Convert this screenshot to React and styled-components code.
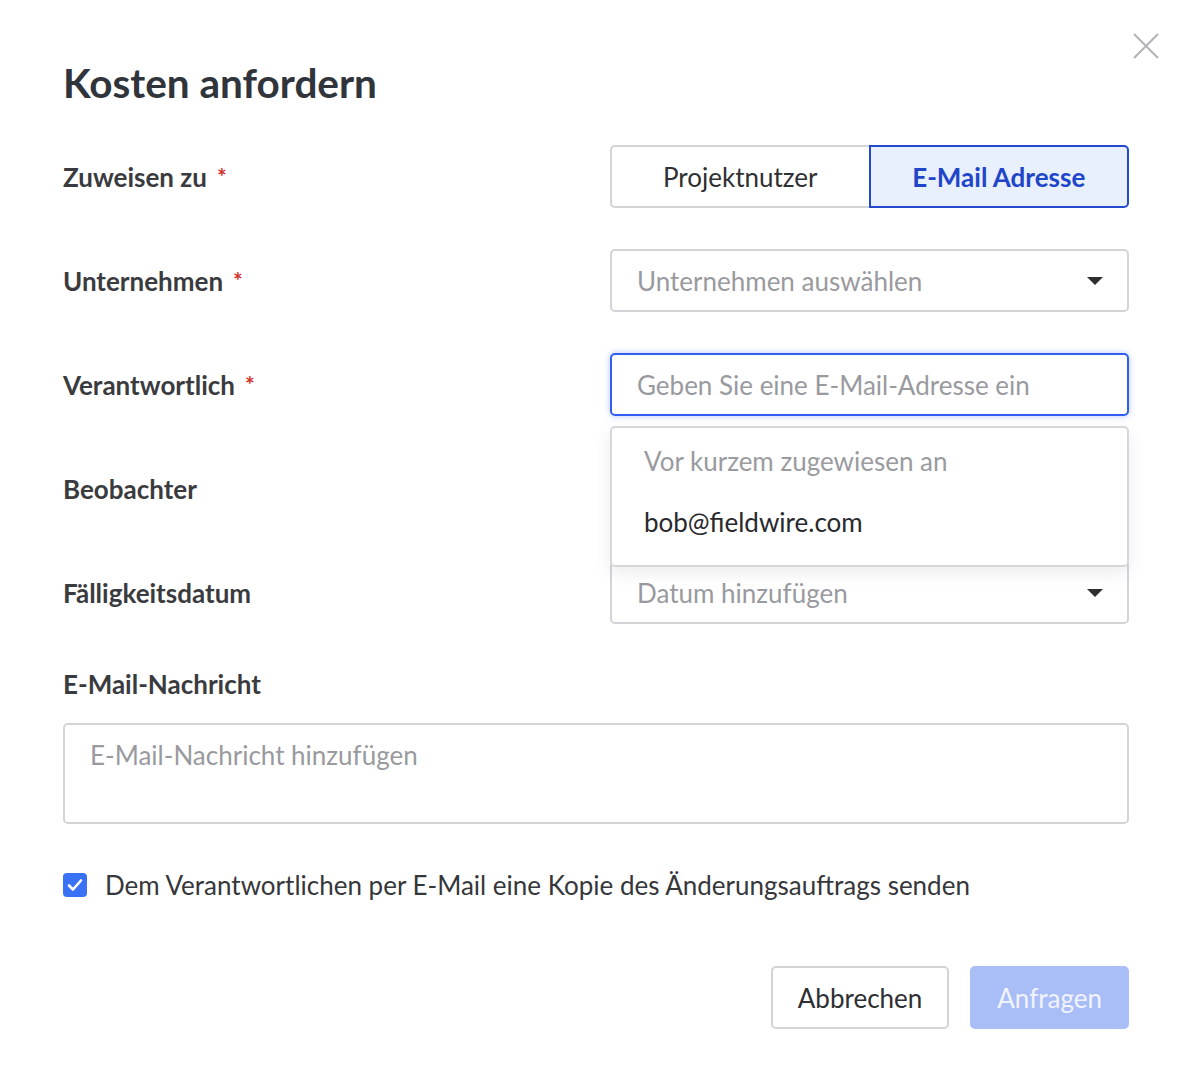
import React from 'react'
import styled, { createGlobalStyle } from 'styled-components'

const GlobalStyle = createGlobalStyle`
  html, body {
    margin: 0;
    padding: 0;
    background: #ffffff;
  }

  body {
    font-family: Lato, "Open Sans", sans-serif;
    color: #38393d;
  }
`

const Dialog = styled.div`
  position: relative;
  width: 1186px;
  height: 1070px;
  box-sizing: border-box;
  padding: 59px 57px 0 63px;
  background: #ffffff;
`

const CloseButton = styled.button`
  position: absolute;
  top: 31px;
  right: 25px;
  width: 30px;
  height: 30px;
  padding: 0;
  border: 0;
  background: transparent;
  cursor: pointer;

  svg {
    display: block;
  }
`

const Title = styled.h1`
  margin: 0;
  font-size: 40.5px;
  line-height: 48px;
  font-weight: 700;
  color: #30343b;
`

const Form = styled.div`
  display: flex;
  flex-direction: column;
  gap: 41px;
  margin-top: 38px;
`

const Row = styled.div`
  display: grid;
  grid-template-columns: 1fr 519px;
  align-items: center;
  height: 63px;
`

const Label = styled.label`
  font-size: 26px;
  font-weight: 700;
  color: #3a3b3e;
  line-height: 30px;
`

const Required = styled.span`
  color: #d0312d;
  font-size: 23px;
  margin-left: 10px;
  vertical-align: 2px;
`

const Segmented = styled.div`
  display: flex;
  height: 63px;
`

const Segment = styled.button`
  flex: 1;
  height: 100%;
  box-sizing: border-box;
  font-family: inherit;
  font-size: 26px;
  font-weight: ${(p) => (p.active ? 700 : 400)};
  color: ${(p) => (p.active ? '#1f45c9' : '#2f3033')};
  background: ${(p) => (p.active ? '#e8effd' : '#ffffff')};
  border: 2px solid ${(p) => (p.active ? '#2349cc' : '#d3d4d8')};
  border-radius: ${(p) => (p.active ? '0 5px 5px 0' : '5px 0 0 5px')};
  ${(p) => (p.active ? '' : 'border-right: 0;')}
  cursor: pointer;
`

const Field = styled.div`
  position: relative;
  height: 63px;
`

const Box = styled.div`
  display: flex;
  align-items: center;
  justify-content: space-between;
  height: 100%;
  box-sizing: border-box;
  padding: 0 24px 0 25px;
  border: 2px solid ${(p) => (p.focused ? '#2f5ef0' : '#d3d4d8')};
  border-radius: 5px;
  background: #ffffff;
  box-shadow: ${(p) => (p.focused ? '0 0 6px rgba(47, 94, 240, 0.35)' : 'none')};
  font-size: 26px;
`

const Placeholder = styled.span`
  color: #999a9e;
`

const Caret = styled.span`
  width: 0;
  height: 0;
  border-left: 8px solid transparent;
  border-right: 8px solid transparent;
  border-top: 8px solid #2d2e31;
`

const Menu = styled.div`
  position: absolute;
  z-index: 2;
  top: calc(100% + 10px);
  left: 0;
  right: 0;
  box-sizing: border-box;
  padding: 15px 0 25px;
  background: #ffffff;
  border: 2px solid #d6d7db;
  border-radius: 5px;
  box-shadow: 0 6px 18px rgba(0, 0, 0, 0.08);
`

const MenuHeader = styled.div`
  padding: 0 32px;
  font-size: 26px;
  line-height: 36px;
  color: #9a9b9f;
`

const MenuItem = styled.div`
  padding: 0 32px;
  margin-top: 25px;
  font-size: 26px;
  line-height: 36px;
  color: #28292c;
`

const MessageLabel = styled(Label)`
  display: block;
  margin-top: 45px;
`

const TextArea = styled.div`
  height: 101px;
  margin-top: 24px;
  box-sizing: border-box;
  padding: 14px 25px;
  border: 2px solid #d3d4d8;
  border-radius: 5px;
  font-size: 26px;
  line-height: 32px;
`

const CheckRow = styled.label`
  display: flex;
  align-items: center;
  gap: 18px;
  margin-top: 45px;
  font-size: 26px;
  color: #36373a;
`

const CheckBox = styled.span`
  display: flex;
  align-items: center;
  justify-content: center;
  width: 24px;
  height: 24px;
  border-radius: 4px;
  background: #3a72f5;
`

const Footer = styled.div`
  display: flex;
  justify-content: flex-end;
  gap: 21px;
  margin-top: 65px;
`

const Button = styled.button`
  height: 63px;
  box-sizing: border-box;
  padding: 0 25px;
  font-family: inherit;
  font-size: 26px;
  border-radius: 5px;
  color: ${(p) => (p.primary ? '#f1f4fe' : '#2e2f32')};
  background: ${(p) => (p.primary ? '#a9bdf7' : '#ffffff')};
  border: 2px solid ${(p) => (p.primary ? '#a9bdf7' : '#d3d4d8')};
  cursor: pointer;
`

export default function App() {
  return (
    <Dialog>
      <GlobalStyle />
      <CloseButton aria-label="Schließen">
        <svg width="30" height="30" viewBox="0 0 30 30">
          <path d="M3 3 L27 27 M27 3 L3 27" stroke="#b3b3b5" strokeWidth="2" fill="none" />
        </svg>
      </CloseButton>

      <Title>Kosten anfordern</Title>

      <Form>
        <Row>
          <Label>Zuweisen zu<Required>*</Required></Label>
          <Segmented>
            <Segment>Projektnutzer</Segment>
            <Segment active>E-Mail Adresse</Segment>
          </Segmented>
        </Row>

        <Row>
          <Label>Unternehmen<Required>*</Required></Label>
          <Field>
            <Box>
              <Placeholder>Unternehmen auswählen</Placeholder>
              <Caret />
            </Box>
          </Field>
        </Row>

        <Row>
          <Label>Verantwortlich<Required>*</Required></Label>
          <Field>
            <Box focused>
              <Placeholder>Geben Sie eine E-Mail-Adresse ein</Placeholder>
            </Box>
            <Menu>
              <MenuHeader>Vor kurzem zugewiesen an</MenuHeader>
              <MenuItem>bob@fieldwire.com</MenuItem>
            </Menu>
          </Field>
        </Row>

        <Row>
          <Label>Beobachter</Label>
          <Field>
            {/* covered by the open menu above */}
            <Box />
          </Field>
        </Row>

        <Row>
          <Label>Fälligkeitsdatum</Label>
          <Field>
            <Box>
              <Placeholder>Datum hinzufügen</Placeholder>
              <Caret />
            </Box>
          </Field>
        </Row>
      </Form>

      <MessageLabel>E-Mail-Nachricht</MessageLabel>
      <TextArea>
        <Placeholder>E-Mail-Nachricht hinzufügen</Placeholder>
      </TextArea>

      <CheckRow>
        <CheckBox>
          <svg width="16" height="14" viewBox="0 0 16 14">
            <path d="M2 7.5 L6 11.5 L14 2.5" stroke="#ffffff" strokeWidth="2.6" fill="none" strokeLinecap="round" strokeLinejoin="round" />
          </svg>
        </CheckBox>
        Dem Verantwortlichen per E-Mail eine Kopie des Änderungsauftrags senden
      </CheckRow>

      <Footer>
        <Button>Abbrechen</Button>
        <Button primary>Anfragen</Button>
      </Footer>
    </Dialog>
  )
}
